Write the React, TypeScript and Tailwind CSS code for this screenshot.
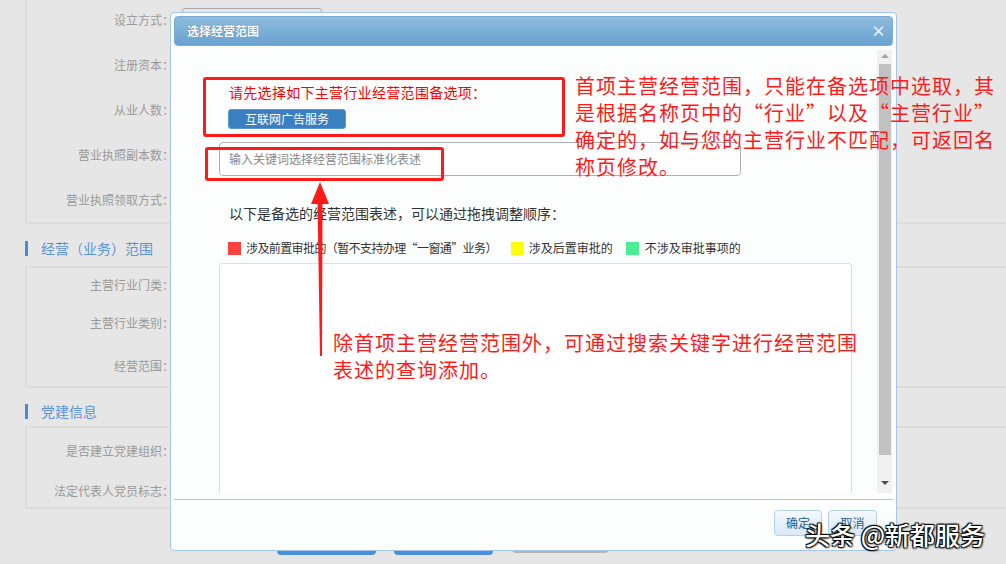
const labelCls = "w-[147px] shrink-0 text-right text-[12px] leading-[16px] text-[#9a9a9a]"

function Row({ label, h, children }: { label: string; h: string; children?: React.ReactNode }) {
  return (
    <div className={`flex items-center ${h}`}>
      <div className={labelCls}>{label}</div>
      {children}
    </div>
  )
}

function SectionTitle({ title, h }: { title: string; h: string }) {
  return (
    <div className={`flex items-center ${h}`}>
      <div className="h-[15px] w-[3px] bg-[#4b8bd5]" />
      <span className="ml-[13px] text-[14px] leading-[18px] text-[#5a93d8]">{title}</span>
    </div>
  )
}

function BackgroundForm() {
  return (
    <div className="w-[1040px] pl-[25px]">
      {/* 基本信息 */}
      <div className="-mt-[3px] border-2 border-t-0 border-[#dcdcdc]">
        <Row label="设立方式：" h="h-[45px]">
          <div className="ml-[8px] h-[24px] w-[140px] rounded-[3px] border border-[#aaa]" />
        </Row>
        <Row label="注册资本：" h="h-[45px]" />
        <Row label="从业人数：" h="h-[45px]" />
        <Row label="营业执照副本数：" h="h-[45px]" />
        <Row label="营业执照领取方式：" h="h-[45px]" />
      </div>

      <SectionTitle title="经营（业务）范围" h="h-[42px] pt-[6px]" />
      <div className="border-2 border-[#dcdcdc]">
        <Row label="主营行业门类：" h="h-[33px]" />
        <Row label="主营行业类别：" h="h-[44px]" />
        <Row label="经营范围：" h="h-[41px]" />
      </div>

      <SectionTitle title="党建信息" h="h-[38px] pt-[8px]" />
      <div className="border-2 border-[#dcdcdc]">
        <Row label="是否建立党建组织：" h="h-[46px]" />
        <Row label="法定代表人党员标志：" h="h-[33px]" />
      </div>

      {/* 底部按钮 */}
      <div className="mt-[14px] flex pl-[252px]">
        <div className="h-[32px] w-[99px] rounded-[4px] bg-[#4a8fdb]" />
        <div className="ml-[18px] h-[32px] w-[99px] rounded-[4px] bg-[#4a8fdb]" />
        <div className="ml-[19px] h-[30px] w-[97px] rounded-[4px] border-2 border-[#b5b5b5]" />
      </div>
    </div>
  )
}

function ScopeDialog() {
  return (
    <div className="absolute left-[170px] top-[12px] flex h-[539px] w-[727px] flex-col rounded-[4px] border border-[#a5c7e5] bg-[#fcfefe] p-[3px]">
      {/* Header */}
      <div className="flex h-[30px] shrink-0 items-center justify-between rounded-[4px] border border-[#79acd6] bg-gradient-to-b from-[#8fbcde] to-[#68a1cf] pl-[12px] pr-[6px]">
        <span className="text-[12px] font-bold leading-[16px] text-white [text-shadow:0_0_1px_#3a6f9f]">
          选择经营范围
        </span>
        <span className="text-[15px] font-bold leading-[16px] text-[#e8f0f8]">×</span>
      </div>

      {/* Body */}
      <div className="flex h-[453px] shrink-0">
        <div className="flex flex-1 flex-col overflow-hidden pb-[6px] pl-[45px] pr-[25px]">
          <div className="mt-[37px] h-[18px] pl-[10px] text-[14px] leading-[18px] tracking-[0.3px] text-[#ff0000]">
            请先选择如下主营行业经营范围备选项：
          </div>
          <div className="ml-[9px] mt-[8px] flex h-[20px] w-[118px] items-center justify-center rounded-[3px] border border-[#5b9ad3] bg-[#3a7fc1] text-[12px] leading-[16px] text-white">
            互联网广告服务
          </div>
          <div className="mt-[13px] flex h-[34px] w-[522px] items-center rounded-[4px] border border-[#b0b0b0] bg-white pl-[9px] text-[12px] leading-[16px] text-[#888]">
            输入关键词选择经营范围标准化表述
          </div>
          <div className="mt-[28px] h-[18px] pl-[10px] text-[14px] leading-[18px] text-[#333]">
            以下是备选的经营范围表述，可以通过拖拽调整顺序：
          </div>
          <div className="mt-[18px] flex h-[16px] items-center pl-[9px] text-[12px] leading-[16px] text-[#333]">
            <span className="h-[13px] w-[13px] bg-[#ff4040]" />
            <span className="ml-[5px] tracking-[-0.6px]">涉及前置审批的（暂不支持办理“一窗通”业务）</span>
            <span className="ml-[14px] h-[13px] w-[13px] bg-[#ffff00]" />
            <span className="ml-[5px]">涉及后置审批的</span>
            <span className="ml-[13px] h-[13px] w-[13px] bg-[#4cee94]" />
            <span className="ml-[6px]">不涉及审批事项的</span>
          </div>
          <div className="mt-[7px] flex-1 rounded-t-[4px] border-x border-t border-[#dedede] bg-white" />
        </div>

        {/* Scrollbar */}
        <div className="mb-[6px] mr-[1px] mt-[4px] flex w-[15px] flex-col items-center bg-[#f1f1f1]">
          <div className="flex h-[12px] items-center justify-center">
            <div className="h-0 w-0 border-x-[4px] border-b-[4px] border-x-transparent border-b-[#a3a3a3]" />
          </div>
          <div className="mt-[2px] h-[391px] w-[12px] bg-[#c1c1c1]" />
          <div className="flex flex-1 items-end justify-center pb-[8px]">
            <div className="h-0 w-0 border-x-[4px] border-t-[4px] border-x-transparent border-t-[#505050]" />
          </div>
        </div>
      </div>

      {/* Footer */}
      <div className="flex flex-1 justify-end gap-[6px] border-t border-[#a5c7e5] pr-[16px] pt-[10px]">
        <button className="flex h-[26px] w-[48px] items-center justify-center rounded-[4px] border border-[#b3d0ea] bg-gradient-to-b from-[#f4f9fe] to-[#d9e9f7] text-[12px] leading-[16px] text-[#2b5d8f]">
          确定
        </button>
        <button className="flex h-[26px] w-[49px] items-center justify-center rounded-[4px] border border-[#b3d0ea] bg-gradient-to-b from-[#f4f9fe] to-[#d9e9f7] text-[12px] leading-[16px] text-[#2b5d8f]">
          取消
        </button>
      </div>
    </div>
  )
}

export default function App() {
  return (
    <div className="relative h-[564px] w-[1006px] overflow-hidden bg-[#e6e6e6] font-['Noto_Sans_CJK_SC',sans-serif]">
      <BackgroundForm />
      <ScopeDialog />

      {/* 标注框 */}
      <div className="absolute left-[203px] top-[77px] h-[60px] w-[362px] rounded-[3px] border-[3px] border-[#ff1a1a]" />
      <div className="absolute left-[205px] top-[147px] h-[34px] w-[239px] rounded-[3px] border-[3px] border-[#ff1a1a]" />

      {/* 箭头 */}
      <svg className="absolute left-[305px] top-[180px]" width="30" height="180" viewBox="0 0 30 180">
        <polygon points="15,2 6,24 24,24" fill="#ff1a1a" />
        <polygon points="12.5,20 17.5,20 17,176 15,176" fill="#ff1a1a" />
      </svg>

      {/* 标注文字 */}
      <div className="absolute left-[575px] top-[72px] whitespace-nowrap text-[20px] leading-[27px] tracking-[1px] text-[#ff1a1a]">
        首项主营经营范围，只能在备选项中选取，其
        <br />
        是根据名称页中的“行业”以及“主营行业”
        <br />
        确定的，如与您的主营行业不匹配，可返回名
        <br />
        称页修改。
      </div>
      <div className="absolute left-[333px] top-[329px] whitespace-nowrap text-[20px] leading-[27px] tracking-[1px] text-[#ff1a1a]">
        除首项主营经营范围外，可通过搜索关键字进行经营范围
        <br />
        表述的查询添加。
      </div>

      {/* 水印 */}
      <div className="absolute left-[805px] top-[518px] whitespace-nowrap text-[25px] font-medium leading-[32px] text-white [text-shadow:1px_1px_2px_#000,-1px_-1px_1px_#000,1px_-1px_1px_#000,-1px_1px_1px_#000]">
        头条 @新都服务
      </div>
    </div>
  )
}
